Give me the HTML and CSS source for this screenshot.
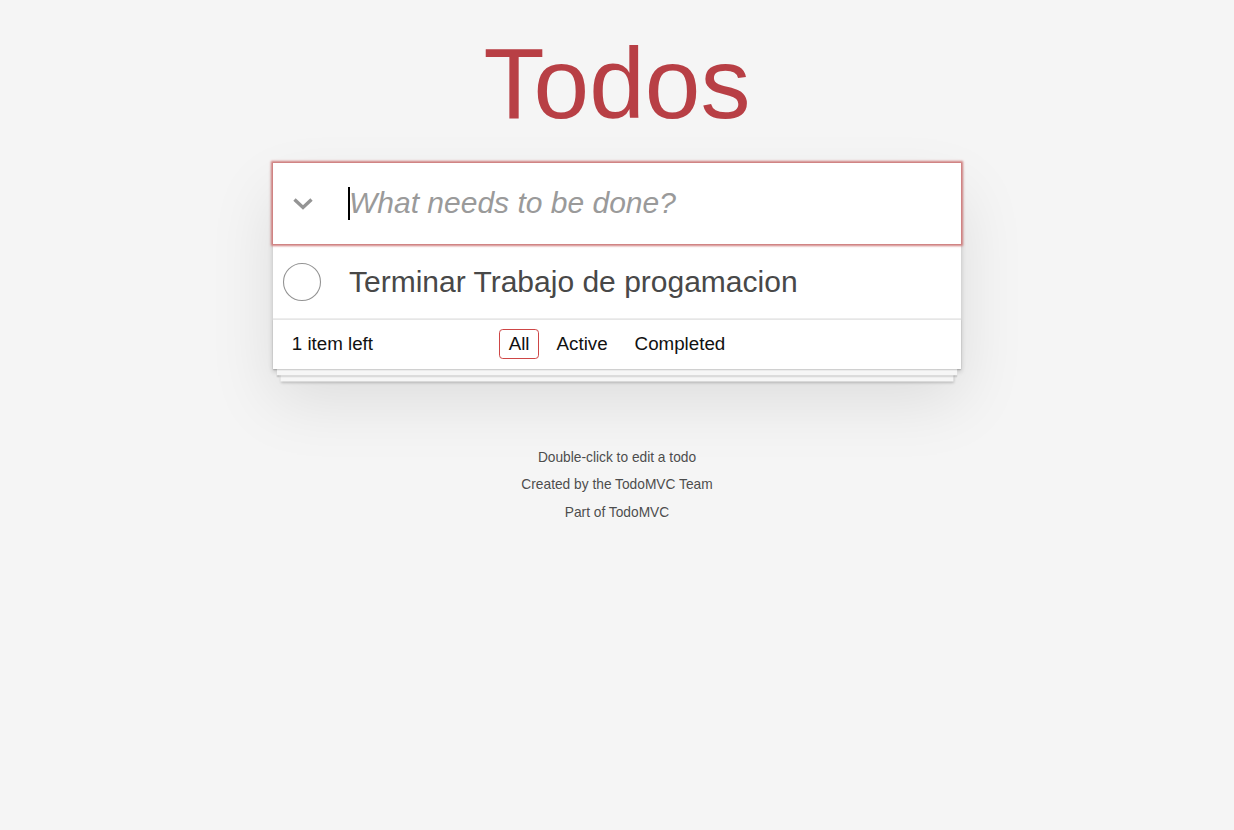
FILE: index.html
```html
<!DOCTYPE html>
<html lang="es">
<head>
<meta charset="utf-8">
<title>Todos</title>
<link rel="stylesheet" href="styles.css">
</head>
<body>
<div class="page">
  <h1 class="title">Todos</h1>
  <section class="todoapp">
    <header class="new-row is-focused">
      <span class="toggle-all">
        <svg width="22" height="14" viewBox="0 0 22 14" aria-hidden="true"><path d="M2.5 2.5 L11 10.5 L19.5 2.5" fill="none" stroke="#949494" stroke-width="3.4" stroke-linejoin="miter"/></svg>
      </span>
      <input class="new-todo" placeholder="What needs to be done?" autofocus>
      <span class="caret" aria-hidden="true"></span>
    </header>
    <ul class="todo-list">
      <li class="todo-item">
        <span class="toggle">
          <svg width="40" height="40" viewBox="0 0 40 40" aria-hidden="true"><circle cx="20" cy="20" r="18.5" fill="none" stroke="#949494" stroke-width="1.1"/></svg>
        </span>
        <label class="todo-label">Terminar Trabajo de progamacion</label>
      </li>
    </ul>
    <footer class="footer">
      <span class="todo-count"><strong class="count-num">1</strong> item left</span>
      <ul class="filters">
        <li><a class="filter selected" href="#/">All</a></li>
        <li><a class="filter" href="#/active">Active</a></li>
        <li><a class="filter" href="#/completed">Completed</a></li>
      </ul>
      <span class="spacer"></span>
    </footer>
  </section>
  <footer class="info">
    <p>Double-click to edit a todo</p>
    <p>Created by the TodoMVC Team</p>
    <p>Part of TodoMVC</p>
  </footer>
</div>
</body>
</html>
```
FILE: styles.css
```css
* { box-sizing: border-box; }
html, body { margin: 0; padding: 0; }
body {
  background: #f5f5f5;
  font-family: "Liberation Sans", Arial, sans-serif;
  color: #111;
  font-size: 17.5px;
  line-height: 1.4;
}
.page {
  width: 688px;
  margin: 0 auto;
  display: flex;
  flex-direction: column;
}
.title {
  margin: 33px 0 29.5px;
  font-size: 100px;
  line-height: 100px;
  font-weight: 200;
  text-align: center;
  color: #b83f45;
}
.todoapp {
  background: #fff;
  position: relative;
  box-shadow: 0 2.5px 5px 0 rgba(0,0,0,0.2), 0 31px 62px 0 rgba(0,0,0,0.1);
}
.new-row {
  display: flex;
  align-items: center;
  height: 81.25px;
  position: relative;
  z-index: 2;
}
.new-row.is-focused { box-shadow: 0 0 2px 2px #cf7d7d; }
.caret {
  position: absolute;
  left: 75px;
  top: 24.5px;
  width: 2px;
  height: 33px;
  background: #000;
}
.toggle-all {
  width: 60px;
  display: flex;
  justify-content: center;
  align-items: center;
  padding-top: 1px;
}
.toggle-all svg { display: block; }
.new-todo {
  flex: 1;
  height: 100%;
  border: none;
  outline: none;
  background: transparent;
  padding: 0 18px 0 16px;
  margin: 0;
  font-family: inherit;
  font-size: 30px;
  color: #484848;
  caret-color: transparent;
}
.new-todo::placeholder {
  font-style: italic;
  font-weight: 400;
  color: #9a9a9a;
}
.todo-list {
  list-style: none;
  margin: 0;
  padding: 0;
  border-top: 1.25px solid #e6e6e6;
}
.todo-item {
  display: flex;
  align-items: center;
  border-bottom: 1.25px solid #ededed;
}
.toggle {
  width: 57.5px;
  display: flex;
  justify-content: center;
  align-items: center;
}
.toggle svg { display: block; }
.todo-label {
  padding: 18.75px 18px 18.75px 18.5px;
  font-size: 30px;
  line-height: 1.2;
  color: #484848;
  font-weight: 400;
}
.footer {
  position: relative;
  display: grid;
  grid-template-columns: 1fr auto 1fr;
  align-items: center;
  height: 50px;
  padding: 0 18.75px 2px;
  border-top: 1px solid #e6e6e6;
  font-size: 18.75px;
  color: #111;
}
.footer::before {
  content: '';
  position: absolute;
  right: 0;
  bottom: 0;
  left: 0;
  height: 50px;
  overflow: hidden;
  z-index: 0;
  box-shadow: 0 1.25px 1.25px rgba(0,0,0,0.2),
              0 10px 0 -3.75px #f6f6f6,
              0 11.25px 1.25px -3.75px rgba(0,0,0,0.2),
              0 20px 0 -7.5px #f6f6f6,
              0 21.25px 2.5px -7.5px rgba(0,0,0,0.2);
}
.todo-count { position: relative; text-align: left; }
.count-num { font-weight: 300; }
.filters {
  position: relative;
  list-style: none;
  margin: 0;
  padding: 0;
  display: flex;
}
.filter {
  display: block;
  margin: 0 3.75px;
  padding: 3.75px 8.75px;
  line-height: 21px;
  border: 1.25px solid transparent;
  border-radius: 3.75px;
  color: inherit;
  text-decoration: none;
}
.filter.selected { border-color: #ce4646; }
.info {
  margin: 81.25px 0 0;
  color: #4d4d4d;
  font-size: 13.75px;
  text-shadow: 0 1px 0 rgba(255,255,255,0.5);
  text-align: center;
}
.info p { margin: 0 0 13.75px; line-height: 1; }
```
